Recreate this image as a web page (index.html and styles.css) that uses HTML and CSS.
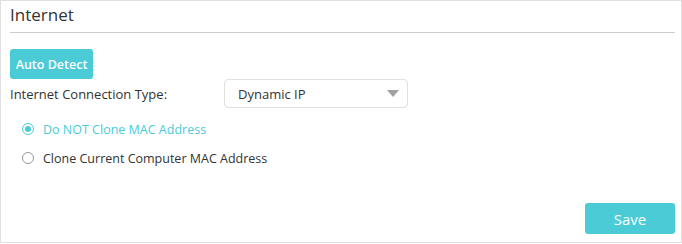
FILE: index.html
```html
<!DOCTYPE html>
<html lang="en">
<head>
    <meta charset="UTF-8">
    <title>Internet</title>
    <link rel="stylesheet" href="styles.css">
</head>
<body>
    <div class="panel">
        <h2 class="panel-title">Internet</h2>

        <button class="btn btn-detect">Auto Detect</button>

        <div class="form-row">
            <label class="form-label">Internet Connection Type:</label>
            <div class="select-box">
                <span>Dynamic IP</span>
                <span class="caret"></span>
            </div>
        </div>

        <div class="radio-list">
            <label class="radio checked"><span class="radio-dot"></span>Do NOT Clone MAC Address</label>
            <label class="radio"><span class="radio-dot"></span>Clone Current Computer MAC Address</label>
        </div>

        <div class="footer">
            <button class="btn btn-save">Save</button>
        </div>
    </div>
</body>
</html>
```

FILE: styles.css
```css
body {
    margin: 0;
    font-family: "Open Sans", sans-serif;
    color: #333;
}

.panel {
    width: 682px;
    height: 243px;
    border: 1px solid #e0e0e0;
    padding: 0 10px 0 9px;
    box-sizing: border-box;
    display: flex;
    flex-direction: column;
    align-items: flex-start;
}

.panel-title {
    align-self: stretch;
    margin: 0 -4px 0 0;
    padding: 2px 0 6px;
    font-size: 17px;
    font-weight: normal;
    border-bottom: 1px solid #ccc;
}

.btn {
    border: none;
    border-radius: 3px;
    background: #4acbd6;
    color: #fff;
    font-family: inherit;
    cursor: pointer;
}

.btn-detect {
    margin-top: 16px;
    width: 83px;
    height: 30px;
    font-size: 12.5px;
    font-weight: 600;
    padding: 0;
}

.form-row {
    display: flex;
    align-items: center;
}

.form-label {
    width: 214px;
    font-size: 13px;
}

.select-box {
    width: 184px;
    height: 29px;
    box-sizing: border-box;
    border: 1px solid #e0e0e0;
    border-radius: 4px;
    display: flex;
    align-items: center;
    justify-content: space-between;
    padding: 0 8px 0 13px;
    font-size: 13px;
}

.caret {
    width: 0;
    height: 0;
    border-left: 6px solid transparent;
    border-right: 6px solid transparent;
    border-top: 7px solid #a0a0a0;
}

.radio-list {
    display: flex;
    flex-direction: column;
    gap: 11px;
    margin-top: 12px;
    padding-left: 12px;
}

.radio {
    display: flex;
    align-items: center;
    gap: 9px;
    font-size: 12.5px;
    height: 18px;
}

.radio.checked {
    color: #4acbd6;
}

.radio-dot {
    width: 12px;
    height: 12px;
    border: 1px solid #999;
    border-radius: 50%;
    box-sizing: border-box;
    display: flex;
    align-items: center;
    justify-content: center;
}

.radio.checked .radio-dot {
    border-color: #4acbd6;
}

.radio.checked .radio-dot::after {
    content: "";
    width: 6px;
    height: 6px;
    border-radius: 50%;
    background: #4acbd6;
}

.footer {
    margin-top: auto;
    margin-bottom: 8px;
    margin-right: -4px;
    align-self: stretch;
    display: flex;
    justify-content: flex-end;
}

.btn-save {
    width: 90px;
    height: 31px;
    font-size: 15px;
}
```
